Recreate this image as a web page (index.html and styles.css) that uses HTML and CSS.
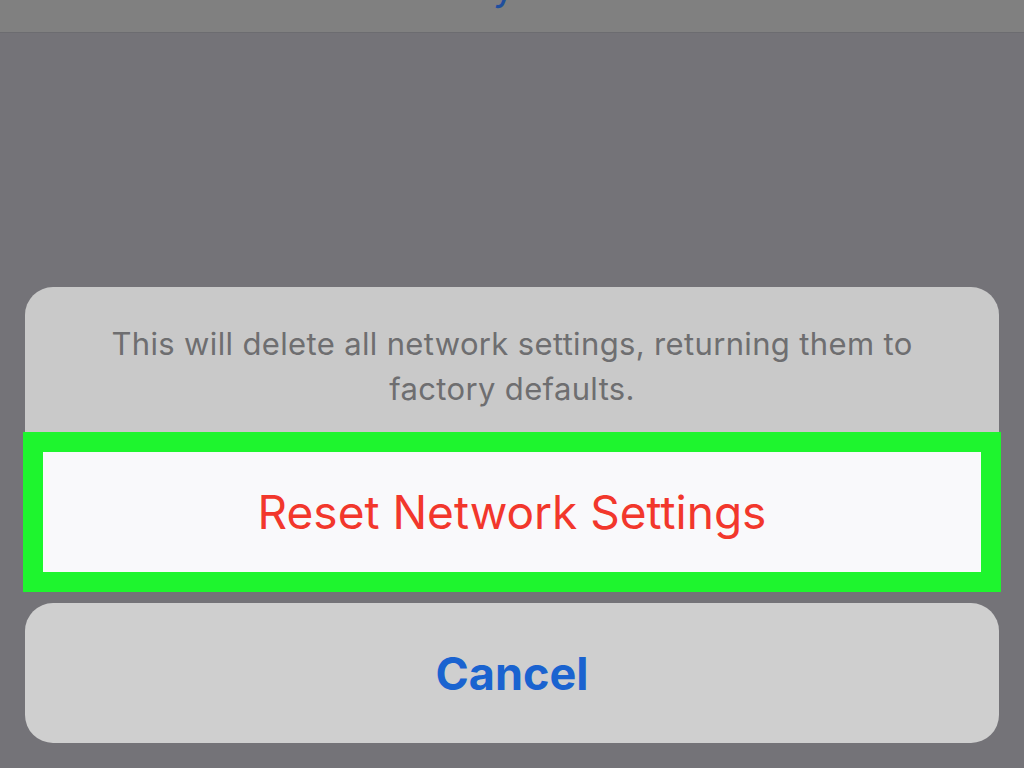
FILE: index.html
```html
<!DOCTYPE html>
<html lang="en">
<head>
<meta charset="utf-8">
<title>Reset Network Settings</title>
<link rel="stylesheet" href="styles.css">
</head>
<body>
<div class="screen">
  <header class="navbar">
    <span class="nav-title">y</span>
  </header>
  <div class="sheet">
    <div class="alert">
      <p class="message">This will delete all network settings, returning them to<br>factory defaults.</p>
      <button class="action destructive">Reset Network Settings</button>
    </div>
    <button class="cancel">Cancel</button>
  </div>
</div>
</body>
</html>
```
FILE: styles.css
```css
html, body {
  margin: 0;
  padding: 0;
}
body {
  width: 1024px;
  height: 768px;
  overflow: hidden;
  background: #747378;
  font-family: Inter, "Noto Sans", sans-serif;
}
.screen {
  display: flex;
  flex-direction: column;
  height: 768px;
}
.navbar {
  height: 32px;
  background: #808080;
  border-bottom: 1px solid #6c6c70;
  display: flex;
  justify-content: center;
  overflow: hidden;
}
.nav-title {
  font-size: 40px;
  line-height: 40px;
  color: #1f4f9e;
  margin-top: -34px;
  margin-left: -16px;
}
.sheet {
  display: flex;
  flex-direction: column;
  padding: 254px 25px 0 25px;
}
.alert {
  background: #c9c9c9;
  border-radius: 28px;
  display: flex;
  flex-direction: column;
}
.message {
  margin: 0;
  height: 145px;
  box-sizing: border-box;
  padding-top: 34px;
  text-align: center;
  font-size: 31px;
  line-height: 45px;
  color: #6e6e70;
  letter-spacing: 0.35px;
}
.action {
  margin: 0 -2px;
  height: 160px;
  border: 20px solid #1ef52e;
  background: #f9f9fb;
  font-family: inherit;
  font-size: 46px;
  color: #f2372c;
  padding: 0;
  cursor: pointer;
}
.cancel {
  margin-top: 11px;
  height: 140px;
  border: none;
  border-radius: 28px;
  background: #cfcfcf;
  font-family: inherit;
  font-size: 45px;
  font-weight: 700;
  color: #1a63d0;
  padding: 0;
  cursor: pointer;
}
```
